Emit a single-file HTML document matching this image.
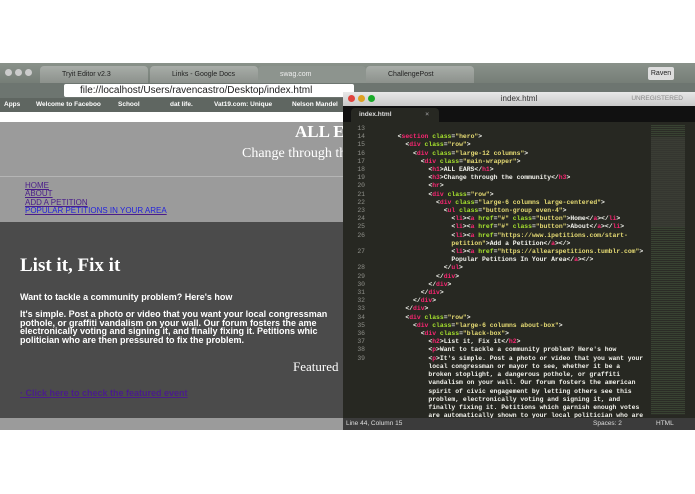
<!DOCTYPE html>
<html><head><style>
*{margin:0;padding:0;box-sizing:border-box}
body{width:695px;height:494px;background:#fff;position:relative;overflow:hidden;font-family:"Liberation Sans",sans-serif}
.abs{position:absolute}
#tabs{left:0;top:63px;width:695px;height:20px;background:linear-gradient(#8a928a,#767e77)}
.tab{position:absolute;top:3px;height:17px;font-size:7px;color:#222;padding:5px 0 0 22px;background:linear-gradient(#a8ada8,#8c918c);border-radius:4px 4px 0 0}
#tool{left:0;top:83px;width:695px;height:15px;background:#6d7570}
#url{left:64px;top:84px;width:290px;height:13px;background:#fff;border-radius:2px;font-size:10px;color:#222;padding:0 0 0 16px;line-height:13px}
#bm{left:0;top:98px;width:695px;height:14px;background:#5f6661;font-size:6.5px;color:#fff;font-weight:bold;line-height:14px}
#bm span{position:absolute}
#g1{left:0;top:122px;width:345px;height:100px;background:#9b9b9b;overflow:hidden}
#g2{left:0;top:222px;width:345px;height:196px;background:#4b4b4b;overflow:hidden}
#g3{left:0;top:418px;width:345px;height:12px;background:#9b9b9b}
.serif{font-family:"Liberation Serif",serif;color:#fff}
#ed{left:343px;top:92px;width:352px;height:338px;background:#272822}
#tb{left:343px;top:92px;width:352px;height:14px;background:linear-gradient(#e8e8e8,#c9c9c9);font-size:8px;color:#333;text-align:center;line-height:14px}
#tabbar{left:343px;top:106px;width:352px;height:16px;background:#111}
#code{left:343px;top:125px;width:306px;height:293px;overflow:hidden;font-family:"Liberation Mono",monospace;font-size:6.4px;line-height:8.2px;color:#f2f2ec;white-space:pre;font-weight:bold}
.ln{display:inline-block;width:22px;text-align:right;color:#8f908a;margin-right:2px;font-weight:normal}
.t{color:#f92672}.a{color:#a6e22e}.s{color:#e6db74}
#status{left:343px;top:418px;width:352px;height:12px;background:#3b3b3b;font-size:6.5px;color:#ddd;line-height:12px}
</style></head><body>
<div id="tabs" class="abs">
<div class="abs" style="left:5px;top:6px;width:7px;height:7px;border-radius:50%;background:#ccc"></div>
<div class="abs" style="left:15px;top:6px;width:7px;height:7px;border-radius:50%;background:#ccc"></div>
<div class="abs" style="left:25px;top:6px;width:7px;height:7px;border-radius:50%;background:#ccc"></div>
<div class="tab" style="left:40px;width:108px">Tryit Editor v2.3</div>
<div class="tab" style="left:150px;width:108px">Links - Google Docs</div>
<div class="tab" style="left:258px;width:108px;color:#eee;background:#8d948e">swag.com</div>
<div class="tab" style="left:366px;width:108px">ChallengePost</div>
<div class="abs" style="left:648px;top:4px;width:26px;height:13px;background:#ddd;border-radius:2px;font-size:7px;line-height:13px;text-align:center;color:#222">Raven</div>
</div>
<div id="tool" class="abs"></div>
<div id="url" class="abs">file://localhost/Users/ravencastro/Desktop/index.html</div>
<div id="bm" class="abs"><span style="left:4px">Apps</span><span style="left:36px">Welcome to Faceboo</span><span style="left:118px">School</span><span style="left:170px">dat life.</span><span style="left:214px">Vat19.com: Unique</span><span style="left:292px">Nelson Mandel</span></div>
<div id="g1" class="abs">
<div class="abs serif" style="left:295px;top:0;font-size:17px;font-weight:bold;white-space:nowrap">ALL EARS</div>
<div class="abs serif" style="left:242px;top:24px;font-size:14px;white-space:nowrap">Change through the</div>
<div class="abs" style="left:0;top:54px;width:345px;height:1px;background:#b5b5b5"></div>
<div class="abs" style="left:25px;top:60px;font-size:8px;line-height:8.3px;color:#4a1d8a;text-decoration:underline">
<div>HOME</div><div>ABOUT</div><div>ADD A PETITION</div><div style="color:#2222dd">POPULAR PETITIONS IN YOUR AREA</div></div>
</div>
<div id="g2" class="abs">
<div class="abs serif" style="left:20px;top:33px;font-size:19px;font-weight:bold">List it, Fix it</div>
<div class="abs" style="left:20px;top:70px;font-size:9px;font-weight:bold;color:#fff">Want to tackle a community problem? Here's how</div>
<div class="abs" style="left:20px;top:88px;font-size:9px;font-weight:bold;color:#fff;line-height:8.5px;white-space:nowrap">It's simple. Post a photo or video that you want your local congressman<br>pothole, or graffiti vandalism on your wall. Our forum fosters the ame<br>electronically voting and signing it, and finally fixing it. Petitions whic<br>politician who are then pressured to fix the problem.</div>
<div class="abs serif" style="left:293px;top:137px;font-size:13px;white-space:nowrap">Featured</div>
<div class="abs" style="left:20px;top:166px;font-size:9px;font-weight:bold;color:#4a1d8a;text-decoration:underline">· Click here to check the featured event</div>
</div>
<div id="g3" class="abs"></div>
<div id="ed" class="abs"></div>
<div id="tb" class="abs">index.html
<div class="abs" style="left:5px;top:3px;width:7px;height:7px;border-radius:50%;background:#e0443e"></div>
<div class="abs" style="left:15px;top:3px;width:7px;height:7px;border-radius:50%;background:#dea123"></div>
<div class="abs" style="left:25px;top:3px;width:7px;height:7px;border-radius:50%;background:#1aab29"></div>
<div class="abs" style="right:12px;top:0;font-size:6.5px;color:#888">UNREGISTERED</div></div>
<div id="tabbar" class="abs"><div class="abs" style="left:8px;top:2px;width:88px;height:14px;background:#272822;border-radius:4px 4px 0 0;font-size:6.5px;color:#ddd;line-height:14px;padding-left:8px;font-weight:bold">index.html<span style="position:absolute;right:10px;color:#888">×</span></div></div>
<div id="code" class="abs"><span class="ln">13</span>
<span class="ln">14</span>        &lt;<span class="t">section</span> <span class="a">class</span>=<span class="s">"hero"</span>&gt;
<span class="ln">15</span>          &lt;<span class="t">div</span> <span class="a">class</span>=<span class="s">"row"</span>&gt;
<span class="ln">16</span>            &lt;<span class="t">div</span> <span class="a">class</span>=<span class="s">"large-12 columns"</span>&gt;
<span class="ln">17</span>              &lt;<span class="t">div</span> <span class="a">class</span>=<span class="s">"main-wrapper"</span>&gt;
<span class="ln">18</span>                &lt;<span class="t">h1</span>&gt;ALL EARS&lt;/<span class="t">h1</span>&gt;
<span class="ln">19</span>                &lt;<span class="t">h3</span>&gt;Change through the community&lt;/<span class="t">h3</span>&gt;
<span class="ln">20</span>                &lt;<span class="t">hr</span>&gt;
<span class="ln">21</span>                &lt;<span class="t">div</span> <span class="a">class</span>=<span class="s">"row"</span>&gt;
<span class="ln">22</span>                  &lt;<span class="t">div</span> <span class="a">class</span>=<span class="s">"large-6 columns large-centered"</span>&gt;
<span class="ln">23</span>                    &lt;<span class="t">ul</span> <span class="a">class</span>=<span class="s">"button-group even-4"</span>&gt;
<span class="ln">24</span>                      &lt;<span class="t">li</span>&gt;&lt;<span class="t">a</span> <span class="a">href</span>=<span class="s">"#"</span> <span class="a">class</span>=<span class="s">"button"</span>&gt;Home&lt;/<span class="t">a</span>&gt;&lt;/<span class="t">li</span>&gt;
<span class="ln">25</span>                      &lt;<span class="t">li</span>&gt;&lt;<span class="t">a</span> <span class="a">href</span>=<span class="s">"#"</span> <span class="a">class</span>=<span class="s">"button"</span>&gt;About&lt;/<span class="t">a</span>&gt;&lt;/<span class="t">li</span>&gt;
<span class="ln">26</span>                      &lt;<span class="t">li</span>&gt;&lt;<span class="t">a</span> <span class="a">href</span>=<span class="s">"https://www.ipetitions.com/start-</span>
<span class="ln"></span>                      <span class="s">petition"</span>&gt;Add a Petition&lt;/<span class="t">a</span>&gt;&lt;/&gt;
<span class="ln">27</span>                      &lt;<span class="t">li</span>&gt;&lt;<span class="t">a</span> <span class="a">href</span>=<span class="s">"https://allearspetitions.tumblr.com"</span>&gt;
<span class="ln"></span>                      Popular Petitions In Your Area&lt;/<span class="t">a</span>&gt;&lt;/&gt;
<span class="ln">28</span>                    &lt;/<span class="t">ul</span>&gt;
<span class="ln">29</span>                  &lt;/<span class="t">div</span>&gt;
<span class="ln">30</span>                &lt;/<span class="t">div</span>&gt;
<span class="ln">31</span>              &lt;/<span class="t">div</span>&gt;
<span class="ln">32</span>            &lt;/<span class="t">div</span>&gt;
<span class="ln">33</span>          &lt;/<span class="t">div</span>&gt;
<span class="ln">34</span>          &lt;<span class="t">div</span> <span class="a">class</span>=<span class="s">"row"</span>&gt;
<span class="ln">35</span>            &lt;<span class="t">div</span> <span class="a">class</span>=<span class="s">"large-6 columns about-box"</span>&gt;
<span class="ln">36</span>              &lt;<span class="t">div</span> <span class="a">class</span>=<span class="s">"black-box"</span>&gt;
<span class="ln">37</span>                &lt;<span class="t">h2</span>&gt;List it, Fix it&lt;/<span class="t">h2</span>&gt;
<span class="ln">38</span>                &lt;<span class="t">p</span>&gt;Want to tackle a community problem? Here's how
<span class="ln">39</span>                &lt;<span class="t">p</span>&gt;It's simple. Post a photo or video that you want your
<span class="ln"></span>                local congressman or mayor to see, whether it be a
<span class="ln"></span>                broken stoplight, a dangerous pothole, or graffiti
<span class="ln"></span>                vandalism on your wall. Our forum fosters the american
<span class="ln"></span>                spirit of civic engagement by letting others see this
<span class="ln"></span>                problem, electronically voting and signing it, and
<span class="ln"></span>                finally fixing it. Petitions which garnish enough votes
<span class="ln"></span>                are automatically shown to your local politician who are</div>
<div class="abs" style="left:651px;top:125px;width:34px;height:290px;background:repeating-linear-gradient(#3d4a36 0 1px,#2c2d27 1px 2px);opacity:.8"></div>
<div class="abs" style="left:651px;top:137px;width:34px;height:90px;background:#3a3b35;opacity:.7"></div>
<div id="status" class="abs"><span style="margin-left:3px">Line 44, Column 15</span><span class="abs" style="left:250px">Spaces: 2</span><span class="abs" style="left:313px">HTML</span></div>
</body></html>
